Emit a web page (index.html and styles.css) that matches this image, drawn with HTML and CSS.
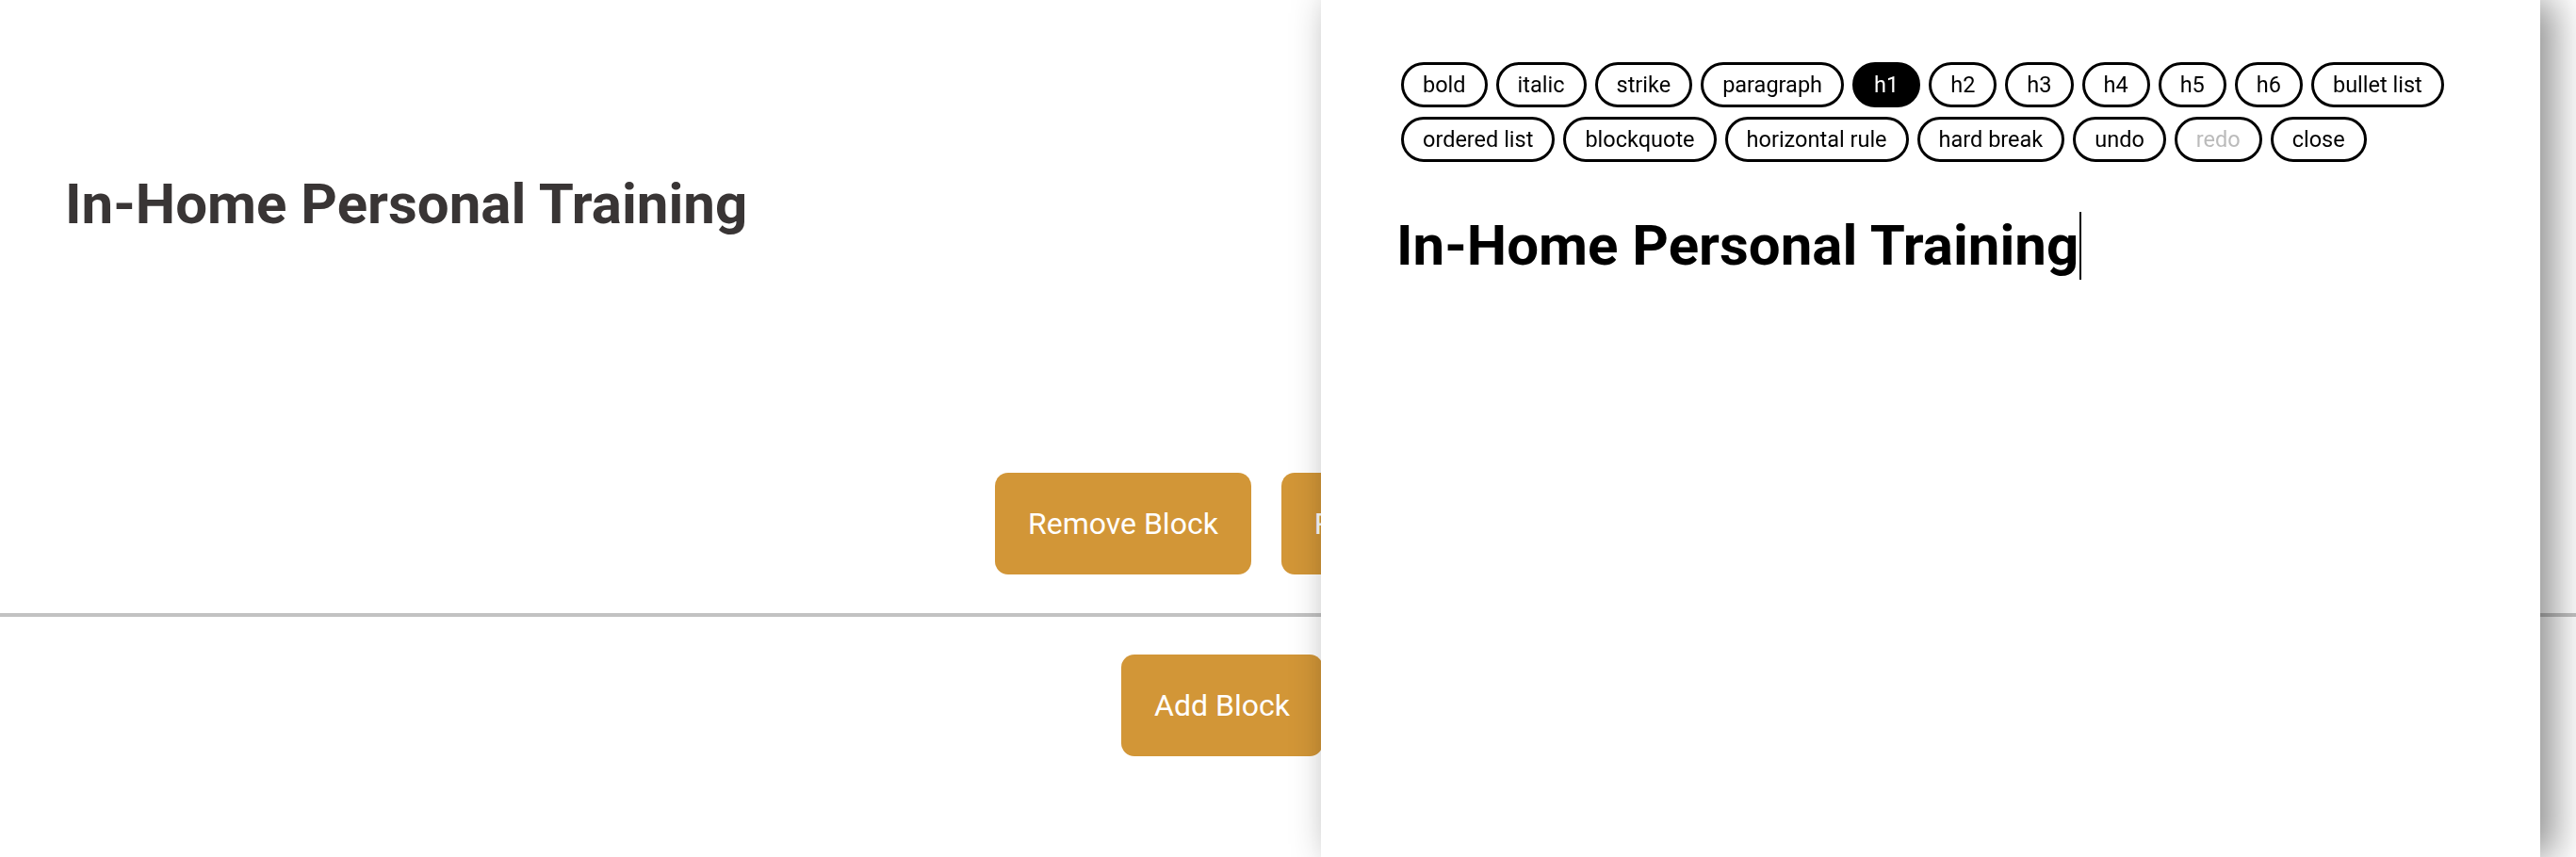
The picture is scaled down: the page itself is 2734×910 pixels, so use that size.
FILE: index.html
```html
<!DOCTYPE html>
<html lang="en">
<head>
  <meta charset="UTF-8">
  <meta name="viewport" content="width=device-width, initial-scale=1.0">
  <title>Block Editor</title>

  <link rel="stylesheet" href="styles.css">
</head>
<body>
  <div class="page">
    <section class="block">
      <h1 class="block-title">In-Home Personal Training</h1>
      <div class="block-actions">
        <button class="btn">Remove Block</button>
        <button class="btn">Reorder Block</button>
      </div>
    </section>

    <div class="add-row">
      <button class="btn">Add Block</button>
    </div>
  </div>

  <aside class="editor">
    <div class="toolbar">
      <button class="tool">bold</button>
      <button class="tool">italic</button>
      <button class="tool">strike</button>
      <button class="tool">paragraph</button>
      <button class="tool is-active">h1</button>
      <button class="tool">h2</button>
      <button class="tool">h3</button>
      <button class="tool">h4</button>
      <button class="tool">h5</button>
      <button class="tool">h6</button>
      <button class="tool">bullet list</button>
      <button class="tool">ordered list</button>
      <button class="tool">blockquote</button>
      <button class="tool">horizontal rule</button>
      <button class="tool">hard break</button>
      <button class="tool">undo</button>
      <button class="tool" disabled>redo</button>
      <button class="tool">close</button>
    </div>

    <div class="editor-content">
      <h1>In-Home Personal Training<span class="caret"></span></h1>
    </div>
  </aside>
</body>
</html>
```

FILE: styles.css
```css
body, html {
  margin: 0;
  height: 100%;
  font-family: Roboto, "Liberation Sans", sans-serif;
  background: #fff;
}
.page {
  width: 100%;
}
.block {
  padding: 181px 72px 0 69px;
  border-bottom: 4px solid #c2c2c2;
}
.block-title {
  margin: 0;
  font-size: 60px;
  font-weight: bold;
  color: #393535;
}
.block-actions {
  display: flex;
  justify-content: center;
  gap: 32px;
  margin-top: 250px;
  padding-right: 47px;
  padding-bottom: 41px;
}
.add-row {
  display: flex;
  justify-content: center;
  padding: 40px 140px 0 0;
}
.btn {
  padding: 35px;
  border: none;
  border-radius: 14px;
  background: #d29637;
  color: #fff;
  font-family: Roboto, "Liberation Sans", sans-serif;
  font-size: 32px;
  line-height: 38px;
  white-space: nowrap;
}

/* side drawer with the rich text editor */
.editor {
  position: fixed;
  top: 0;
  bottom: 0;
  left: 1402px;
  width: 1294px;
  box-sizing: border-box;
  padding: 66px 85px;
  background: #fff;
  box-shadow: 14px 0 40px rgba(0, 0, 0, 0.45);
}
.toolbar {
  display: flex;
  flex-wrap: wrap;
  gap: 10px 9px;
}
.tool {
  padding: 7px 20px;
  border: 3px solid #000;
  border-radius: 24px;
  background: #fff;
  color: #000;
  font-family: Roboto, "Liberation Sans", sans-serif;
  font-size: 23.5px;
  line-height: 28px;
}
.tool.is-active {
  background: #000;
  color: #fff;
}
.tool:disabled {
  color: #bbb;
}
.editor-content h1 {
  margin: 53px 0 0 -5px;
  font-size: 60px;
  font-weight: bold;
  color: #000;
}
.caret {
  display: inline-block;
  width: 2px;
  height: 72px;
  margin-left: 1px;
  vertical-align: top;
  background: #000;
}
```
